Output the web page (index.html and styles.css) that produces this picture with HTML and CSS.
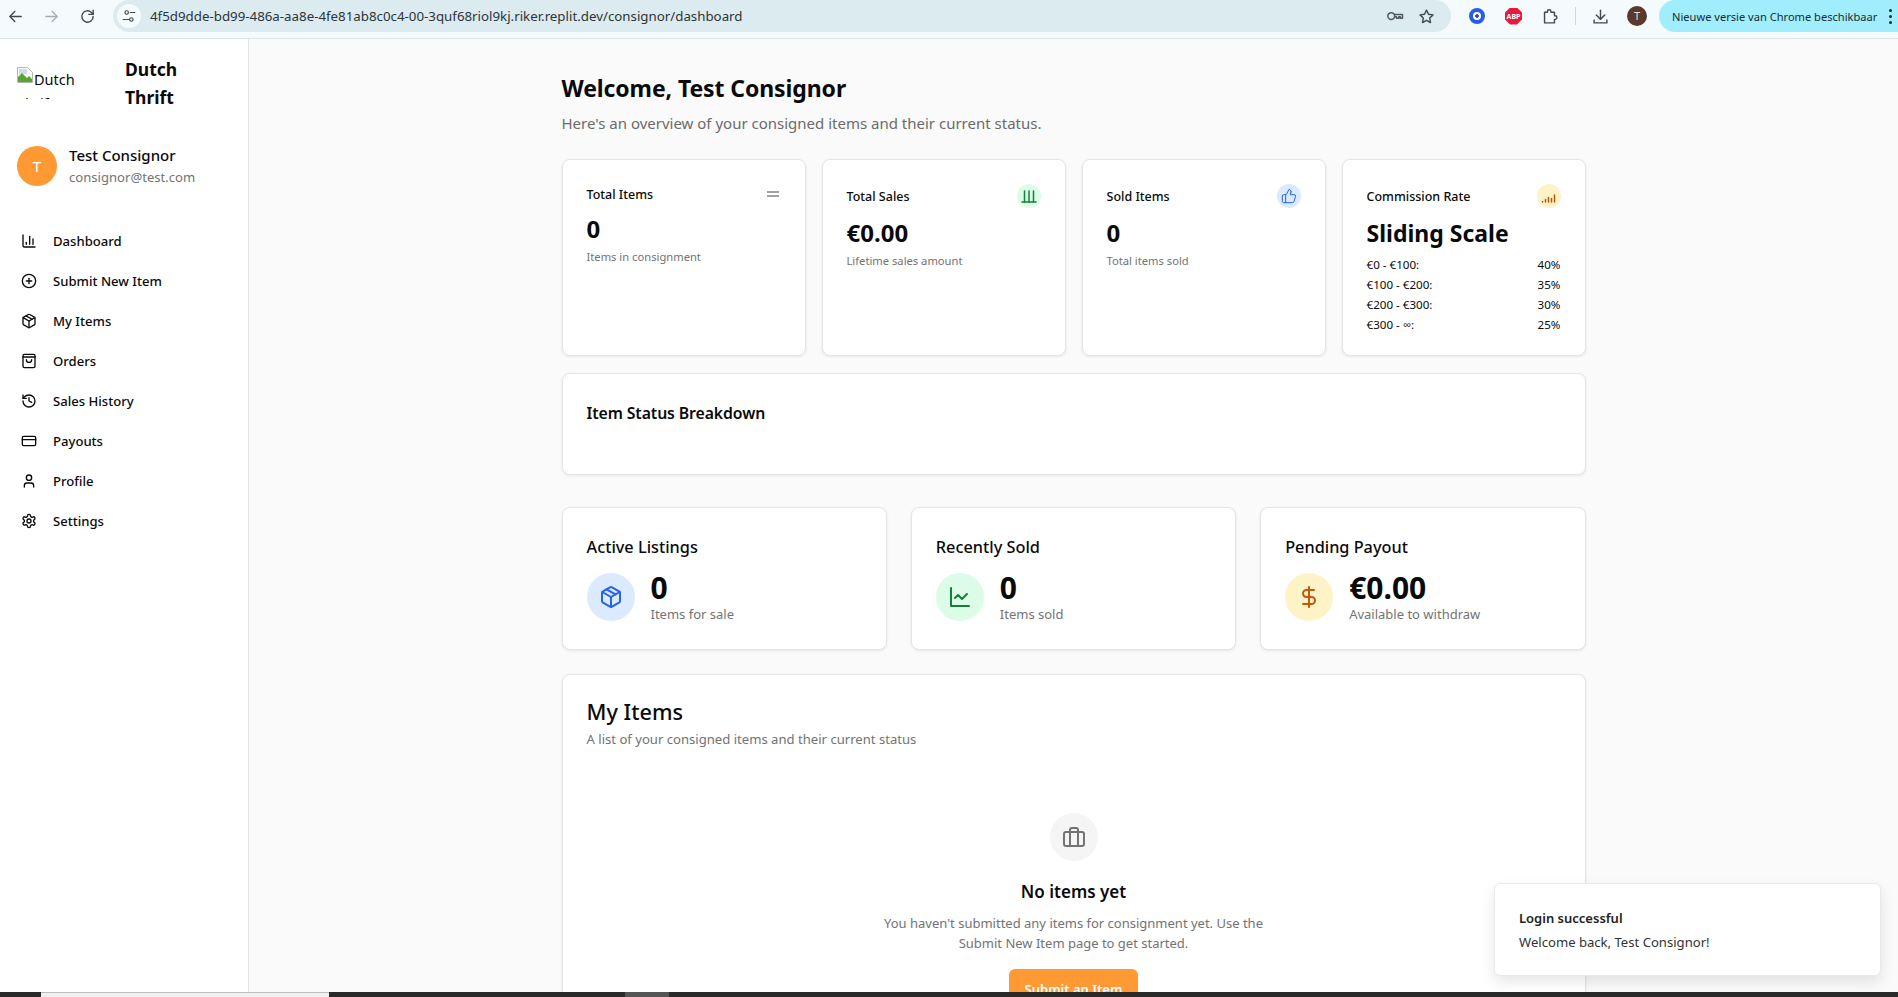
FILE: index.html
```html
<!DOCTYPE html>
<html lang="en">
<head>
    <meta charset="UTF-8">
    <meta name="viewport" content="width=device-width, initial-scale=1.0">
    <title>Dutch Thrift - Dashboard</title>
    <link rel="stylesheet" href="styles.css">
</head>
<body>
    <!-- browser toolbar -->
    <header class="toolbar">
        <div class="toolbar-nav">
            <svg class="icon tool-icon" viewBox="0 0 24 24"><path d="M20 12H5"/><path d="m11 5-7 7 7 7"/></svg>
            <svg class="icon tool-icon faded" viewBox="0 0 24 24"><path d="M4 12h15"/><path d="m13 5 7 7-7 7"/></svg>
            <svg class="icon tool-icon" viewBox="0 0 24 24"><path d="M20 12a8 8 0 1 1-2.500-5.800L20 8.500"/><path d="M20 3v6h-6"/></svg>
        </div>
        <div class="omnibox">
            <span class="tune">
                <svg class="icon" viewBox="0 0 24 24"><circle cx="8" cy="6" r="3"/><path d="M14 6h8"/><circle cx="16" cy="18" r="3"/><path d="M2 18h10"/></svg>
            </span>
            <span class="url">4f5d9dde-bd99-486a-aa8e-4fe81ab8c0c4-00-3quf68riol9kj.riker.replit.dev/consignor/dashboard</span>
            <svg class="icon key-icon" viewBox="0 0 24 24"><circle cx="7" cy="12" r="4.500"/><path d="M11.500 10h10.500v5h-3v-2h-2v2h-3v-2h-2.500"/></svg>
            <svg class="icon star-icon" viewBox="0 0 24 24"><path d="m12 3 2.800 5.900 6.400.8-4.700 4.400 1.200 6.400-5.700-3.100-5.700 3.100 1.200-6.400-4.700-4.400 6.400-.8z"/></svg>
        </div>
        <div class="extensions">
            <span class="ext-ring"></span>
            <span class="ext-abp">ABP</span>
            <svg class="icon tool-icon puzzle" viewBox="0 0 24 24"><path d="M5 6h4V5a2.500 2.500 0 0 1 5 0v1h5v5h1a2.500 2.500 0 0 1 0 5h-1v5H5z"/></svg>
            <span class="ext-sep"></span>
            <svg class="icon tool-icon" viewBox="0 0 24 24"><path d="M12 3v13"/><path d="m6 10 6 6 6-6"/><path d="M3 17v4h18v-4"/></svg>
            <span class="chrome-avatar">T</span>
        </div>
        <div class="update-pill">
            <span>Nieuwe versie van Chrome beschikbaar</span>
            <span class="pill-dots"><i></i><i></i><i></i></span>
        </div>
    </header>

    <div class="app">
        <aside class="sidebar">
            <div class="brand">
                <div class="broken-logo">
                    <svg class="broken-icon" viewBox="0 0 16 16">
                        <path d="M0.500 0.500h10l5 5v10h-15z" fill="#fff" stroke="#b5b5b5"/>
                        <path d="M2 2h8v5H2z" fill="#c8dcf8"/>
                        <path d="M1 15v-5l4-4 5 5 2-2 3 3v3z" fill="#5aa532"/>
                    </svg>
                    Dutch Thrift
                </div>
                <div class="brand-name">Dutch Thrift</div>
            </div>

            <div class="user-box">
                <div class="user-avatar">T</div>
                <div>
                    <div class="user-name">Test Consignor</div>
                    <div class="user-mail">consignor@test.com</div>
                </div>
            </div>

            <nav class="side-nav">
                <a class="nav-row">
                    <svg class="icon" viewBox="0 0 24 24"><path d="M3 3v16a2 2 0 0 0 2 2h16"/><path d="M18 17V9"/><path d="M13 17V5"/><path d="M8 17v-3"/></svg>
                    Dashboard
                </a>
                <a class="nav-row">
                    <svg class="icon" viewBox="0 0 24 24"><circle cx="12" cy="12" r="10"/><path d="M8 12h8"/><path d="M12 8v8"/></svg>
                    Submit New Item
                </a>
                <a class="nav-row">
                    <svg class="icon" viewBox="0 0 24 24"><path d="M11 21.730a2 2 0 0 0 2 0l7-4A2 2 0 0 0 21 16V8a2 2 0 0 0-1-1.730l-7-4a2 2 0 0 0-2 0l-7 4A2 2 0 0 0 3 8v8a2 2 0 0 0 1 1.730z"/><path d="M12 22V12"/><path d="M3.290 7 12 12l8.710-5"/><path d="m7.500 4.270 9 5.150"/></svg>
                    My Items
                </a>
                <a class="nav-row">
                    <svg class="icon" viewBox="0 0 24 24"><rect x="3" y="2" width="18" height="20" rx="2"/><path d="M3 6h18"/><path d="M16 10a4 4 0 0 1-8 0"/></svg>
                    Orders
                </a>
                <a class="nav-row">
                    <svg class="icon" viewBox="0 0 24 24"><path d="M3 12a9 9 0 1 0 9-9 9.750 9.750 0 0 0-6.740 2.740L3 8"/><path d="M3 3v5h5"/><path d="M12 7v5l4 2"/></svg>
                    Sales History
                </a>
                <a class="nav-row">
                    <svg class="icon" viewBox="0 0 24 24"><rect x="2" y="5" width="20" height="14" rx="2"/><path d="M2 10h20"/></svg>
                    Payouts
                </a>
                <a class="nav-row">
                    <svg class="icon" viewBox="0 0 24 24"><path d="M19 21v-2a4 4 0 0 0-4-4H9a4 4 0 0 0-4 4v2"/><circle cx="12" cy="7" r="4"/></svg>
                    Profile
                </a>
                <a class="nav-row">
                    <svg class="icon" viewBox="0 0 24 24"><path d="M12.220 2h-.44a2 2 0 0 0-2 2v.18a2 2 0 0 1-1 1.730l-.43.25a2 2 0 0 1-2 0l-.15-.08a2 2 0 0 0-2.730.73l-.22.38a2 2 0 0 0 .73 2.730l.15.1a2 2 0 0 1 1 1.720v.51a2 2 0 0 1-1 1.740l-.15.09a2 2 0 0 0-.73 2.730l.22.38a2 2 0 0 0 2.730.73l.15-.08a2 2 0 0 1 2 0l.43.25a2 2 0 0 1 1 1.730V20a2 2 0 0 0 2 2h.44a2 2 0 0 0 2-2v-.18a2 2 0 0 1 1-1.730l.43-.25a2 2 0 0 1 2 0l.15.08a2 2 0 0 0 2.730-.73l.22-.39a2 2 0 0 0-.73-2.730l-.15-.08a2 2 0 0 1-1-1.740v-.5a2 2 0 0 1 1-1.740l.15-.09a2 2 0 0 0 .73-2.730l-.22-.38a2 2 0 0 0-2.730-.73l-.15.08a2 2 0 0 1-2 0l-.43-.25a2 2 0 0 1-1-1.730V4a2 2 0 0 0-2-2z"/><circle cx="12" cy="12" r="3"/></svg>
                    Settings
                </a>
            </nav>
        </aside>

        <main class="main">
            <div class="content">
                <h1 class="page-title">Welcome, Test Consignor</h1>
                <p class="page-sub">Here's an overview of your consigned items and their current status.</p>

                <section class="stat-grid">
                    <div class="card stat-card">
                        <div class="stat-head">
                            <span class="stat-title">Total Items</span>
                            <span class="equals-icon"></span>
                        </div>
                        <div class="stat-value">0</div>
                        <div class="stat-note">Items in consignment</div>
                    </div>

                    <div class="card stat-card">
                        <div class="stat-head">
                            <span class="stat-title">Total Sales</span>
                            <span class="badge badge-green">
                                <svg class="icon" viewBox="0 0 16 16"><path d="M1 14h14"/><path d="M3.500 3v11"/><path d="M8 3v11"/><path d="M12.500 3v11"/></svg>
                            </span>
                        </div>
                        <div class="stat-value">€0.00</div>
                        <div class="stat-note">Lifetime sales amount</div>
                    </div>

                    <div class="card stat-card">
                        <div class="stat-head">
                            <span class="stat-title">Sold Items</span>
                            <span class="badge badge-blue">
                                <svg class="icon" viewBox="0 0 24 24"><path d="M7 10v12"/><path d="M15 5.880 14 10h5.830a2 2 0 0 1 1.920 2.560l-2.330 8A2 2 0 0 1 17.500 22H4a2 2 0 0 1-2-2v-8a2 2 0 0 1 2-2h2.760a2 2 0 0 0 1.790-1.110L12 2a3.130 3.130 0 0 1 3 3.880Z"/></svg>
                            </span>
                        </div>
                        <div class="stat-value">0</div>
                        <div class="stat-note">Total items sold</div>
                    </div>

                    <div class="card stat-card">
                        <div class="stat-head">
                            <span class="stat-title">Commission Rate</span>
                            <span class="badge badge-amber">
                                <svg class="icon" viewBox="0 0 16 16"><path d="M1.500 13.500v.5"/><path d="M4.500 11.500V14"/><path d="M7.500 9.500V14"/><path d="M10.500 10.500V14"/><path d="M13.500 7v7"/></svg>
                            </span>
                        </div>
                        <div class="stat-value scale-value">Sliding Scale</div>
                        <div class="rate-list">
                            <div class="rate-row"><span>€0 - €100:</span><span>40%</span></div>
                            <div class="rate-row"><span>€100 - €200:</span><span>35%</span></div>
                            <div class="rate-row"><span>€200 - €300:</span><span>30%</span></div>
                            <div class="rate-row"><span>€300 - ∞:</span><span>25%</span></div>
                        </div>
                    </div>
                </section>

                <section class="card status-card">
                    <h2 class="status-title">Item Status Breakdown</h2>
                </section>

                <section class="summary-grid">
                    <div class="card summary-card">
                        <h3 class="summary-title">Active Listings</h3>
                        <div class="summary-body">
                            <span class="round round-blue">
                                <svg class="icon" viewBox="0 0 24 24"><path d="M11 21.730a2 2 0 0 0 2 0l7-4A2 2 0 0 0 21 16V8a2 2 0 0 0-1-1.730l-7-4a2 2 0 0 0-2 0l-7 4A2 2 0 0 0 3 8v8a2 2 0 0 0 1 1.730z"/><path d="M12 22V12"/><path d="M3.290 7 12 12l8.710-5"/><path d="m7.500 4.270 9 5.150"/></svg>
                            </span>
                            <div>
                                <div class="summary-value">0</div>
                                <div class="summary-note">Items for sale</div>
                            </div>
                        </div>
                    </div>

                    <div class="card summary-card">
                        <h3 class="summary-title">Recently Sold</h3>
                        <div class="summary-body">
                            <span class="round round-green">
                                <svg class="icon" viewBox="0 0 24 24"><path d="M3 3v18h18"/><path d="m19 9-5 5-4-4-3 3"/></svg>
                            </span>
                            <div>
                                <div class="summary-value">0</div>
                                <div class="summary-note">Items sold</div>
                            </div>
                        </div>
                    </div>

                    <div class="card summary-card">
                        <h3 class="summary-title">Pending Payout</h3>
                        <div class="summary-body">
                            <span class="round round-amber">
                                <svg class="icon" viewBox="0 0 24 24"><path d="M12 2v20"/><path d="M17 5H9.500a3.500 3.500 0 0 0 0 7h5a3.500 3.500 0 0 1 0 7H6"/></svg>
                            </span>
                            <div>
                                <div class="summary-value">€0.00</div>
                                <div class="summary-note">Available to withdraw</div>
                            </div>
                        </div>
                    </div>
                </section>

                <section class="card items-card">
                    <h2 class="items-title">My Items</h2>
                    <p class="items-sub">A list of your consigned items and their current status</p>

                    <div class="empty">
                        <span class="empty-round">
                            <svg class="icon" viewBox="0 0 24 24"><rect x="2" y="7" width="20" height="14" rx="2"/><path d="M16 21V5a2 2 0 0 0-2-2h-4a2 2 0 0 0-2 2v16"/></svg>
                        </span>
                        <h3 class="empty-title">No items yet</h3>
                        <p class="empty-text">You haven't submitted any items for consignment yet. Use the Submit New Item page to get started.</p>
                        <button class="submit-button" type="button">Submit an Item</button>
                    </div>
                </section>
            </div>
        </main>

        <div class="toast">
            <div class="toast-title">Login successful</div>
            <div class="toast-text">Welcome back, Test Consignor!</div>
        </div>
    </div>

    <!-- bit of the windows taskbar at the bottom -->
    <footer class="taskbar">
        <span class="task-light"></span>
        <span class="task-gray"></span>
    </footer>
</body>
</html>
```

FILE: styles.css
```css
*
{
    box-sizing: border-box;
}

html,
body
{
    height: 100%;
}

body
{
    margin: 0;
    display: flex;
    flex-direction: column;
    overflow: hidden;
    font-family: "Noto Sans", "Open Sans", sans-serif;
    color: #0a0a0a;
    background-color: #fafafa;
}

h1,
h2,
h3,
p
{
    margin: 0;
}

.icon
{
    display: block;
    fill: none;
    stroke: currentColor;
    stroke-width: 2;
    stroke-linecap: round;
    stroke-linejoin: round;
}

/* browser toolbar */
.toolbar
{
    flex: none;
    height: 39px;
    display: flex;
    align-items: flex-start;
    background-color: #f5fafc;
    border-bottom: 1px solid #dde5ea;
}

.toolbar-nav
{
    width: 113px;
    height: 32px;
    display: flex;
    align-items: center;
    gap: 19px;
    padding-left: 7px;
}

.tool-icon
{
    width: 17px;
    height: 17px;
    color: #3f4a50;
}

.tool-icon.faded
{
    color: #a4adb2;
}

.omnibox
{
    width: 1338px;
    height: 32px;
    display: flex;
    align-items: center;
    padding: 0 16px 0 4px;
    border-radius: 16px;
    background-color: #dcebf0;
}

.tune
{
    width: 24px;
    height: 24px;
    flex: none;
    display: flex;
    align-items: center;
    justify-content: center;
    border-radius: 50%;
    background-color: #f5fafc;
    color: #3f4a50;
}

.tune svg
{
    width: 14px;
    height: 14px;
}

.url
{
    flex: 1;
    margin-left: 9px;
    font-size: 13.300px;
    white-space: nowrap;
    color: #2d3438;
}

.key-icon
{
    width: 18px;
    height: 18px;
    margin-right: 14px;
    color: #50595e;
}

.star-icon
{
    width: 17px;
    height: 17px;
    color: #3f4a50;
}

.extensions
{
    width: 208px;
    height: 32px;
    display: flex;
    align-items: center;
    padding-left: 18px;
}

.ext-ring
{
    width: 16px;
    height: 16px;
    flex: none;
    border: 4px solid #2a5be8;
    border-radius: 50%;
    background: radial-gradient(circle, #1f45b8 0 1.500px, #fff 2px);
    margin-right: 20px;
}

.ext-abp
{
    width: 17px;
    height: 17px;
    flex: none;
    margin-right: 19px;
    clip-path: polygon(30% 0, 70% 0, 100% 30%, 100% 70%, 70% 100%, 30% 100%, 0 70%, 0 30%);
    background-color: #e8193c;
    color: #fff;
    font-size: 7px;
    font-weight: 700;
    line-height: 17px;
    text-align: center;
}

.puzzle
{
    margin-right: 17px;
}

.ext-sep
{
    width: 1px;
    height: 18px;
    flex: none;
    margin-right: 16px;
    background-color: #a9e6f5;
}

.chrome-avatar
{
    width: 20px;
    height: 20px;
    flex: none;
    margin-left: 18px;
    border-radius: 50%;
    background-color: #5a3a2e;
    color: #e8dcd6;
    font-size: 11px;
    line-height: 20px;
    text-align: center;
}

.update-pill
{
    flex: 1;
    height: 32px;
    display: flex;
    align-items: center;
    justify-content: space-between;
    padding: 0 6px 0 13px;
    border-radius: 16px 0 0 16px;
    background-color: #a0eefd;
    font-size: 11.100px;
    white-space: nowrap;
    color: #1a2a30;
}

.pill-dots
{
    display: flex;
    flex-direction: column;
    gap: 3px;
}

.pill-dots i
{
    width: 3px;
    height: 3px;
    border-radius: 50%;
    background-color: #1a2a30;
}

/* page */
.app
{
    flex: 1;
    min-height: 0;
    display: flex;
    overflow: hidden;
    position: relative;
}

.sidebar
{
    width: 249px;
    flex: none;
    background-color: #fff;
    border-right: 1px solid #e5e5e5;
}

.brand
{
    display: flex;
    align-items: center;
    gap: 24px;
    padding: 16px 17px 0;
}

.broken-logo
{
    width: 84px;
    height: 32px;
    flex: none;
    overflow: hidden;
    font-size: 14.500px;
    line-height: 24px;
    color: #0a0a0a;
}

.broken-icon
{
    float: left;
    width: 16px;
    height: 16px;
    margin-right: 1px;
}

.brand-name
{
    width: 70px;
    font-size: 17.500px;
    font-weight: 700;
    line-height: 28px;
}

.user-box
{
    display: flex;
    align-items: center;
    gap: 12px;
    margin-top: 33px;
    padding: 0 17px;
}

.user-avatar
{
    width: 40px;
    height: 40px;
    flex: none;
    border-radius: 50%;
    background-color: #ff9933;
    color: #fff;
    font-size: 15px;
    line-height: 40px;
    text-align: center;
}

.user-name
{
    font-size: 15px;
    font-weight: 500;
    line-height: 22px;
}

.user-mail
{
    margin-top: 1px;
    font-size: 13.100px;
    line-height: 20px;
    color: #737373;
}

.side-nav
{
    margin-top: 34px;
    padding-left: 21px;
}

.nav-row
{
    height: 40px;
    display: flex;
    align-items: center;
    gap: 16px;
    font-size: 13.100px;
    font-weight: 500;
}

.nav-row svg
{
    width: 16px;
    height: 16px;
}

.main
{
    flex: 1;
    min-width: 0;
    padding-top: 33px;
}

.content
{
    width: 1024px;
    margin: 0 auto;
}

.page-title
{
    font-size: 23px;
    font-weight: 700;
    line-height: 32px;
    letter-spacing: -0.1px;
}

.page-sub
{
    margin-top: 7px;
    font-size: 15px;
    line-height: 24px;
    color: #6b6b6b;
}

.card
{
    background-color: #fff;
    border: 1px solid #e5e5e5;
    border-radius: 8px;
    box-shadow: 0 1px 3px rgba(0, 0, 0, 0.08);
}

.stat-grid
{
    display: grid;
    grid-template-columns: repeat(4, 1fr);
    gap: 16px;
    margin-top: 24px;
}

.stat-card
{
    height: 197px;
    padding: 24px;
}

.stat-head
{
    display: flex;
    align-items: center;
    justify-content: space-between;
    margin-bottom: 9px;
    font-size: 12.500px;
    font-weight: 500;
    line-height: 20px;
}

.stat-title
{
    height: 20px;
    padding-top: 1px;
}

.stat-value
{
    font-size: 24px;
    font-weight: 700;
    line-height: 32px;
}

.scale-value
{
    font-size: 23px;
}

.stat-note
{
    margin-top: 4px;
    font-size: 11.200px;
    line-height: 16px;
    color: #737373;
}

.equals-icon
{
    width: 12px;
    height: 6px;
    margin-right: 2px;
    border-top: 2px solid #a3a3a3;
    border-bottom: 2px solid #a3a3a3;
}

.badge
{
    width: 24px;
    height: 24px;
    display: flex;
    align-items: center;
    justify-content: center;
    border-radius: 50%;
}

.badge svg
{
    width: 16px;
    height: 16px;
    stroke-width: 1.500;
}

.badge-green
{
    background-color: #dcfce7;
    color: #15803d;
}

.badge-blue
{
    background-color: #dbeafe;
    color: #2563eb;
}

.badge-amber
{
    background-color: #fef3c7;
    color: #b45309;
}

.rate-list
{
    display: flex;
    flex-direction: column;
    gap: 4px;
    margin-top: 8px;
}

.rate-row
{
    display: flex;
    justify-content: space-between;
    font-size: 11.600px;
    line-height: 16px;
}

.status-card
{
    height: 102px;
    margin-top: 17px;
    padding: 25px 24px 24px;
}

.status-title
{
    font-size: 15.800px;
    font-weight: 600;
    line-height: 28px;
    letter-spacing: -0.1px;
}

.summary-grid
{
    display: grid;
    grid-template-columns: repeat(3, 1fr);
    gap: 24px;
    margin-top: 32px;
}

.summary-card
{
    padding: 25px 24px;
}

.summary-title
{
    font-size: 16.300px;
    font-weight: 500;
    line-height: 28px;
}

.summary-body
{
    display: flex;
    align-items: center;
    gap: 16px;
    margin-top: 9px;
}

.round
{
    width: 48px;
    height: 48px;
    flex: none;
    display: flex;
    align-items: center;
    justify-content: center;
    border-radius: 50%;
}

.round svg
{
    width: 24px;
    height: 24px;
}

.round-blue
{
    background-color: #dbeafe;
    color: #2563eb;
}

.round-green
{
    background-color: #dcfce7;
    color: #15803d;
}

.round-amber
{
    background-color: #fef3c7;
    color: #c2570c;
}

.summary-value
{
    font-size: 30px;
    font-weight: 700;
    line-height: 36px;
}

.summary-note
{
    margin-top: -2px;
    font-size: 13px;
    line-height: 20px;
    color: #737373;
}

.items-card
{
    margin-top: 24px;
    padding: 25px 24px;
    height: 400px;
}

.items-title
{
    font-size: 21.700px;
    font-weight: 500;
    line-height: 24px;
}

.items-sub
{
    margin-top: 5px;
    font-size: 13.100px;
    line-height: 20px;
    color: #737373;
}

.empty
{
    display: flex;
    flex-direction: column;
    align-items: center;
    margin-top: 64px;
    text-align: center;
}

.empty-round
{
    width: 48px;
    height: 48px;
    display: flex;
    align-items: center;
    justify-content: center;
    border-radius: 50%;
    background-color: #f5f5f5;
    color: #737373;
}

.empty-round svg
{
    width: 24px;
    height: 24px;
}

.empty-title
{
    margin-top: 17px;
    font-size: 17px;
    font-weight: 600;
    line-height: 28px;
}

.empty-text
{
    width: 400px;
    margin-top: 7px;
    font-size: 13px;
    line-height: 20px;
    color: #737373;
}

.submit-button
{
    width: 129px;
    height: 40px;
    margin-top: 16px;
    border: none;
    border-radius: 6px;
    background-color: #ff9933;
    color: #fff;
    font-family: inherit;
    font-size: 13px;
    font-weight: 600;
}

.toast
{
    position: absolute;
    left: 1494px;
    top: 844px;
    width: 387px;
    height: 93px;
    padding: 22px 24px;
    background-color: #fff;
    border: 1px solid #e9e9e9;
    border-radius: 6px;
    box-shadow: 0 6px 14px rgba(0, 0, 0, 0.1);
}

.toast-title
{
    font-size: 13px;
    font-weight: 600;
    line-height: 24px;
    color: #222;
}

.toast-text
{
    font-size: 13.100px;
    line-height: 24px;
    color: #333;
}

/* taskbar */
.taskbar
{
    flex: none;
    height: 5px;
    display: flex;
    padding-left: 41px;
    background-color: #2a2a2a;
}

.task-light
{
    width: 288px;
    background-color: #f0f0f0;
    border-top: 1px solid #bdbdbd;
}

.task-gray
{
    width: 44px;
    margin-left: 296px;
    background-color: #555;
}
```
